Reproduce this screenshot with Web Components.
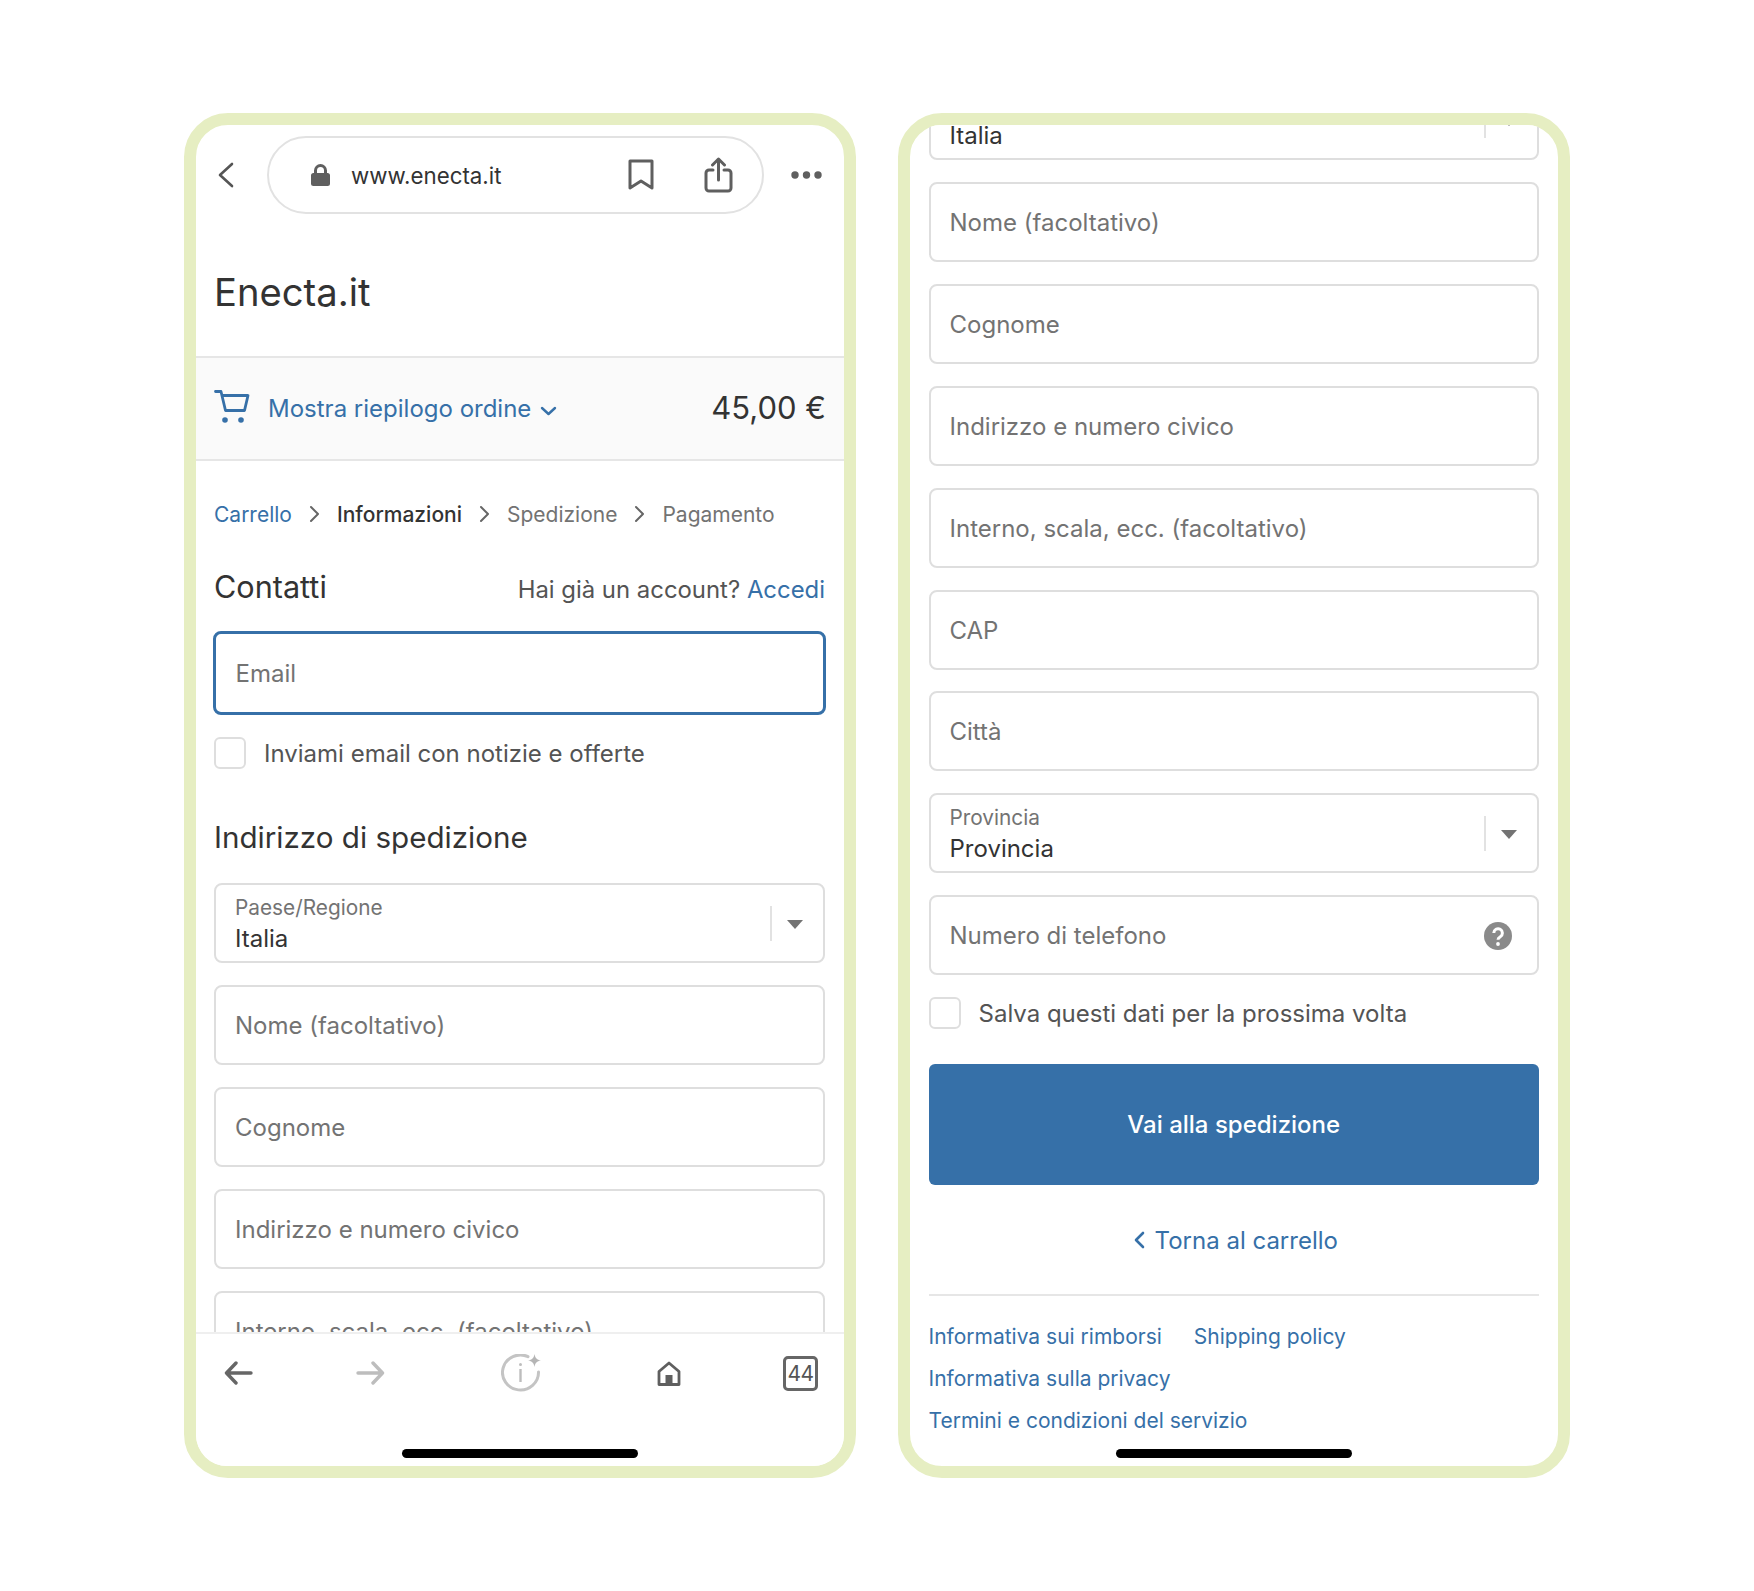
<!DOCTYPE html>
<html lang="it">
<head>
<meta charset="utf-8">
<title>Enecta.it checkout</title>
<style>
html, body { margin: 0; background: #fff; }
body {
    font-family: Inter, "Liberation Sans", sans-serif;
    color: #333;
    width: 1754px;
    height: 1591px;
    overflow: hidden;
}
main {
    display: flex;
    gap: 42px;
    padding: 113px 0 0 184px;
}
</style>
</head>
<body>
<main>
    <phone-frame>
        <browser-bar url="www.enecta.it"></browser-bar>
        <shop-title>Enecta.it</shop-title>
        <order-summary total="45,00 €">Mostra riepilogo ordine</order-summary>
        <form-column slot="main" class="first">
            <step-trail></step-trail>
            <section-head class="contact" link="Accedi" note="Hai già un account?">Contatti</section-head>
            <text-field focused>Email</text-field>
            <check-row>Inviami email con notizie e offerte</check-row>
            <section-head class="ship">Indirizzo di spedizione</section-head>
            <select-field label="Paese/Regione">Italia</select-field>
            <text-field>Nome (facoltativo)</text-field>
            <text-field>Cognome</text-field>
            <text-field>Indirizzo e numero civico</text-field>
            <text-field>Interno, scala, ecc. (facoltativo)</text-field>
            <text-field>CAP</text-field>
        </form-column>
        <nav-bar slot="foot"></nav-bar>
    </phone-frame>

    <phone-frame anchor="end">
        <form-column slot="main">
            <select-field label="Paese/Regione">Italia</select-field>
            <text-field>Nome (facoltativo)</text-field>
            <text-field>Cognome</text-field>
            <text-field>Indirizzo e numero civico</text-field>
            <text-field>Interno, scala, ecc. (facoltativo)</text-field>
            <text-field>CAP</text-field>
            <text-field>Città</text-field>
            <select-field label="Provincia">Provincia</select-field>
            <text-field help>Numero di telefono</text-field>
            <check-row>Salva questi dati per la prossima volta</check-row>
            <checkout-footer></checkout-footer>
        </form-column>
    </phone-frame>
</main>

<script>
function shadow(el, html) {
    el.attachShadow({mode: "open"}).innerHTML = html;
}

class PhoneFrame extends HTMLElement {
    connectedCallback() {
        let justify = this.getAttribute("anchor") === "end" ? "flex-end" : "flex-start";
        shadow(this, `
        <style>
        :host {
            display: block;
            width: 672px;
            height: 1365px;
            box-sizing: border-box;
            border: 12px solid #e6eec2;
            border-radius: 44px;
            background: #fff;
            position: relative;
            flex: none;
        }
        .screen {
            height: 100%;
            border-radius: 31px;
            overflow: hidden;
            display: flex;
            flex-direction: column;
        }
        .main {
            flex: 1;
            min-height: 0;
            overflow: hidden;
            display: flex;
            flex-direction: column;
            justify-content: ${justify};
        }
        .indicator {
            position: absolute;
            left: 206px;
            bottom: 8px;
            width: 236px;
            height: 9px;
            border-radius: 5px;
            background: #000;
        }
        </style>
        <div class="screen">
            <slot></slot>
            <div class="main"><slot name="main"></slot></div>
            <slot name="foot"></slot>
        </div>
        <div class="indicator"></div>`);
    }
}

class BrowserBar extends HTMLElement {
    connectedCallback() {
        shadow(this, `
        <style>
        :host { display: flex; align-items: center; padding: 11px 0 0 21px; flex: none; }
        svg { display: block; flex: none; }
        .pill {
            margin-left: 32px;
            width: 497px;
            height: 78px;
            box-sizing: border-box;
            border: 2px solid #e2e2e2;
            border-radius: 39px;
            display: flex;
            align-items: center;
            padding-left: 42px;
        }
        .url { margin-left: 21px; font-size: 22.300px; color: #333; width: 277px; flex: none; }
        .share { margin-left: 50px; }
        .dots { margin-left: 27px; }
        </style>
        <svg width="18" height="26" viewBox="0 0 18 26" fill="none" stroke="#555" stroke-width="2.600" stroke-linecap="round" stroke-linejoin="round"><path d="M15 2 3 13l12 11"/></svg>
        <div class="pill">
            <svg width="19" height="22" viewBox="0 0 19 22"><path fill="#5f5f5f" d="M3 9V6.500a6.500 6.500 0 0 1 13 0V9h.5A2.500 2.500 0 0 1 19 11.500V19.500A2.500 2.500 0 0 1 16.500 22h-14A2.500 2.500 0 0 1 0 19.500v-8A2.500 2.500 0 0 1 2.500 9Zm3 0h7V6.500a3.500 3.500 0 0 0-7 0Z"/></svg>
            <span class="url">${this.getAttribute("url")}</span>
            <svg width="26" height="32" viewBox="0 0 26 32" fill="none" stroke="#5f5f5f" stroke-width="3" stroke-linejoin="round"><path d="M2 2h22v27L13 22 2 29Z"/></svg>
            <svg class="share" width="29" height="36" viewBox="0 0 29 36" fill="none" stroke="#5f5f5f" stroke-width="3" stroke-linecap="round" stroke-linejoin="round"><path d="M9 13H5a3 3 0 0 0-3 3v15a3 3 0 0 0 3 3h19a3 3 0 0 0 3-3V16a3 3 0 0 0-3-3h-4M14.500 23V2M8.500 8l6-6 6 6"/></svg>
        </div>
        <svg class="dots" width="31" height="8" viewBox="0 0 31 8" fill="#5f5f5f"><circle cx="4" cy="4" r="3.700"/><circle cx="15.500" cy="4" r="3.700"/><circle cx="27" cy="4" r="3.700"/></svg>`);
    }
}

class ShopTitle extends HTMLElement {
    connectedCallback() {
        shadow(this, `
        <style>
        :host { display: block; padding: 54px 18px 0; height: 88px; font-size: 38.200px; line-height: 48px; color: #333; flex: none; }
        </style>
        <slot></slot>`);
    }
}

class OrderSummary extends HTMLElement {
    connectedCallback() {
        shadow(this, `
        <style>
        :host {
            display: flex;
            align-items: center;
            height: 105px;
            box-sizing: border-box;
            padding: 0 18px 0 18px;
            background: #fafafa;
            border-top: 2px solid #e6e6e6;
            border-bottom: 2px solid #e6e6e6;
            flex: none;
        }
        .cart { margin-bottom: 3px; }
        .label { margin-left: 18px; font-size: 24px; color: #3670a8; }
        .chev { margin-left: 9px; margin-top: 4px; }
        .total { margin-left: auto; margin-bottom: 2px; font-size: 31px; color: #333; }
        svg { display: block; flex: none; }
        </style>
        <svg class="cart" width="36" height="34" viewBox="0 0 36 34" fill="none" stroke="#3670a8" stroke-width="2.800" stroke-linecap="round" stroke-linejoin="round"><path d="M1.500 1.500H7l4.500 19h19l3.500-15H8"/><circle cx="11" cy="30" r="2.800" fill="#3670a8" stroke="none"/><circle cx="27" cy="30" r="2.800" fill="#3670a8" stroke="none"/></svg>
        <span class="label"><slot></slot></span>
        <svg class="chev" width="17" height="10" viewBox="0 0 17 10" fill="none" stroke="#3670a8" stroke-width="2.400" stroke-linecap="round" stroke-linejoin="round"><path d="M2 2l6.500 6L15 2"/></svg>
        <span class="total">${this.getAttribute("total")}</span>`);
    }
}

class FormColumn extends HTMLElement {
    connectedCallback() {
        shadow(this, `
        <style>
        :host {
            display: flex;
            flex-direction: column;
            gap: 21.900px;
            padding: 0 19px 0 18.500px;
            flex: none;
        }
        :host(.first) { padding-left: 18px; }
        </style>
        <slot></slot>`);
    }
}

class StepTrail extends HTMLElement {
    connectedCallback() {
        let chev = `<svg width="11" height="18" viewBox="0 0 11 18" fill="none" stroke="#666" stroke-width="2" stroke-linecap="round" stroke-linejoin="round"><path d="M2 2l7 7-7 7"/></svg>`;
        shadow(this, `
        <style>
        :host {
            display: flex;
            align-items: center;
            gap: 17px;
            margin-top: 37px;
            height: 32px;
            font-size: 21px;
            color: #737373;
        }
        a { color: #3670a8; }
        b { color: #333; font-weight: 500; }
        svg { display: block; flex: none; }
        </style>
        <a>Carrello</a>${chev}<b>Informazioni</b>${chev}<span>Spedizione</span>${chev}<span>Pagamento</span>`);
    }
}

class SectionHead extends HTMLElement {
    connectedCallback() {
        let note = this.getAttribute("note");
        let extra = note ? `<span class="note">${note} <a>${this.getAttribute("link")}</a></span>` : "";
        shadow(this, `
        <style>
        :host {
            display: flex;
            justify-content: space-between;
            align-items: center;
            height: 44px;
            font-size: 29.600px;
            color: #333;
        }
        :host(.contact) { margin: 13px 0 0; font-size: 30.600px; }
        :host(.ship) { margin: 24px 0 2px; }
        .note { font-size: 23.900px; color: #545454; margin-top: 6px; }
        a { color: #3670a8; }
        </style>
        <span><slot></slot></span>${extra}`);
    }
}

class TextField extends HTMLElement {
    connectedCallback() {
        let help = this.hasAttribute("help")
            ? `<svg width="28" height="28" viewBox="0 0 28 28"><circle cx="14" cy="14" r="14" fill="#8a8a8a"/><path d="M9.800 11a4.300 4.300 0 1 1 6.500 3.700c-1.500.9-2.300 1.700-2.300 3" fill="none" stroke="#fff" stroke-width="3"/><circle cx="14" cy="22" r="1.900" fill="#fff"/></svg>`
            : "";
        shadow(this, `
        <style>
        :host {
            display: flex;
            align-items: center;
            justify-content: space-between;
            height: 80px;
            box-sizing: border-box;
            border: 2px solid #dedede;
            border-radius: 8px;
            padding: 1px 25px 0 19px;
            font-size: 24px;
            color: #737373;
            background: #fff;
        }
        :host([focused]) {
            height: 84.500px;
            border: 3px solid #3670a8;
            padding-left: 19.500px;
            margin: 0 -1px;
        }
        svg { display: block; flex: none; }
        </style>
        <span><slot></slot></span>${help}`);
    }
}

class SelectField extends HTMLElement {
    connectedCallback() {
        shadow(this, `
        <style>
        :host {
            display: block;
            height: 80px;
            box-sizing: border-box;
            border: 2px solid #dedede;
            border-radius: 8px;
            padding: 0 0 0 19px;
            background: #fff;
            position: relative;
        }
        .label { position: absolute; top: 10px; left: 19px; font-size: 20.800px; line-height: 26px; color: #737373; }
        .value { position: absolute; top: 39px; left: 19px; font-size: 24px; line-height: 30px; color: #333; }
        .sep { position: absolute; top: 21px; right: 51px; width: 2px; height: 35px; background: #e2e2e2; }
        .arrow {
            position: absolute;
            top: 35px;
            right: 20px;
            width: 0;
            height: 0;
            border-left: 8.500px solid transparent;
            border-right: 8.500px solid transparent;
            border-top: 9px solid #737373;
        }
        </style>
        <span class="label">${this.getAttribute("label")}</span>
        <span class="value"><slot></slot></span>
        <span class="sep"></span>
        <span class="arrow"></span>`);
    }
}

class CheckRow extends HTMLElement {
    connectedCallback() {
        shadow(this, `
        <style>
        :host {
            display: flex;
            align-items: center;
            gap: 18px;
            height: 32px;
            font-size: 24px;
            color: #545454;
        }
        .box {
            width: 32px;
            height: 32px;
            box-sizing: border-box;
            border: 2px solid #dedede;
            border-radius: 6px;
            flex: none;
        }
        </style>
        <span class="box"></span><span><slot></slot></span>`);
    }
}

class CheckoutFooter extends HTMLElement {
    connectedCallback() {
        shadow(this, `
        <style>
        :host { display: block; margin-top: 13px; padding-bottom: 24px; }
        .go {
            height: 121px;
            border-radius: 6px;
            background: #3670a8;
            color: #fff;
            font-size: 24px;
            font-weight: 500;
            display: flex;
            align-items: center;
            justify-content: center;
        }
        .back {
            display: flex;
            align-items: center;
            justify-content: center;
            gap: 10px;
            height: 30px;
            margin-top: 40px;
            padding-left: 4px;
            font-size: 24px;
            color: #3670a8;
        }
        svg { display: block; }
        hr { border: 0; height: 2px; background: #e6e6e6; margin: 39px 0 20px; }
        .links {
            display: flex;
            flex-wrap: wrap;
            column-gap: 32px;
            font-size: 21px;
            line-height: 42px;
            color: #3670a8;
        }
        .links a { white-space: nowrap; }
        .links i { flex-basis: 100%; height: 0; }
        </style>
        <div class="go">Vai alla spedizione</div>
        <div class="back">
            <svg width="11" height="18" viewBox="0 0 11 18" fill="none" stroke="#3670a8" stroke-width="2.600" stroke-linecap="round" stroke-linejoin="round"><path d="M9 2 2 9l7 7"/></svg>
            <span>Torna al carrello</span>
        </div>
        <hr>
        <div class="links">
            <a>Informativa sui rimborsi</a><a>Shipping policy</a><i></i>
            <a>Informativa sulla privacy</a><i></i>
            <a>Termini e condizioni del servizio</a>
        </div>`);
    }
}

class NavBar extends HTMLElement {
    connectedCallback() {
        shadow(this, `
        <style>
        :host {
            display: flex;
            height: 134px;
            box-sizing: border-box;
            padding: 20px 0 0 28px;
            border-top: 2px solid #efefef;
            background: #fff;
            align-items: flex-start;
            flex: none;
        }
        svg { display: block; flex: none; }
        .back { margin-top: 7px; }
        .forward { margin: 7px 0 0 103px; }
        .info { margin-left: 116px; }
        .home { margin: 7px 0 0 115px; }
        .tabs {
            margin: 2px 0 0 102px;
            width: 35px;
            height: 35px;
            box-sizing: border-box;
            border: 3px solid #666;
            border-radius: 5px;
            display: flex;
            align-items: center;
            justify-content: center;
            font-size: 21px;
            letter-spacing: -.5px;
            line-height: 1;
            color: #555;
            flex: none;
        }
        </style>
        <svg class="back" width="29" height="24" viewBox="0 0 29 24" fill="none" stroke="#666" stroke-width="3.400" stroke-linecap="round" stroke-linejoin="round"><path d="M27 12H3M12 2 2.500 12 12 22"/></svg>
        <svg class="forward" width="29" height="24" viewBox="0 0 29 24" fill="none" stroke="#bdbdbd" stroke-width="3.400" stroke-linecap="round" stroke-linejoin="round"><path d="M2 12h24M17 2l9.500 10L17 22"/></svg>
        <svg class="info" width="41" height="39" viewBox="0 0 41 39" fill="none"><path d="M27 2.600A18 17.500 0 1 0 37.500 18" stroke="#c4c4c4" stroke-width="3" stroke-linecap="round"/><path d="M19.500 15v13" stroke="#bdbdbd" stroke-width="2.400"/><circle cx="19.500" cy="10.500" r="1.500" fill="#bdbdbd"/><path d="M33.500 0c.8 4.200 2.300 5.700 6.500 6.500-4.200.8-5.700 2.300-6.500 6.500-.8-4.200-2.300-5.700-6.500-6.500 4.200-.8 5.700-2.300 6.500-6.500Z" fill="#b5b5b5"/></svg>
        <svg class="home" width="24" height="25" viewBox="0 0 24 25" fill="none"><path d="M2 23.500V10.500L12 2l10 8.500v13Z" stroke="#5f5f5f" stroke-width="2.800" stroke-linejoin="round"/><path fill="#5f5f5f" d="M8.500 14h7v10h-7Z"/></svg>
        <div class="tabs">44</div>`);
    }
}

customElements.define("phone-frame", PhoneFrame);
customElements.define("browser-bar", BrowserBar);
customElements.define("shop-title", ShopTitle);
customElements.define("order-summary", OrderSummary);
customElements.define("form-column", FormColumn);
customElements.define("step-trail", StepTrail);
customElements.define("section-head", SectionHead);
customElements.define("text-field", TextField);
customElements.define("select-field", SelectField);
customElements.define("check-row", CheckRow);
customElements.define("checkout-footer", CheckoutFooter);
customElements.define("nav-bar", NavBar);
</script>
</body>
</html>
